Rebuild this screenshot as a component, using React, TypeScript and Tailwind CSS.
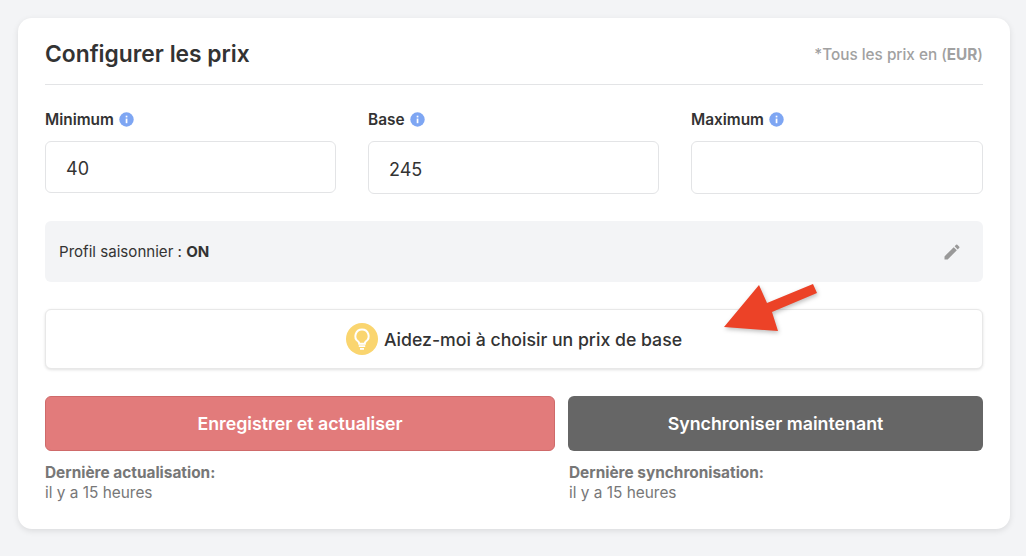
import React from 'react';

const FONT = "font-['Inter','Noto_Sans',sans-serif]";

const InfoIcon: React.FC = () => (
  <svg width="15" height="15" viewBox="0 0 15 15" className="ml-[5px] shrink-0">
    <circle cx="7.5" cy="7.5" r="7.2" fill="#7ea6f3" />
    <rect x="6.7" y="6.6" width="1.7" height="4.6" fill="#fff" />
    <rect x="6.7" y="3.7" width="1.7" height="1.7" fill="#fff" />
  </svg>
);

const PriceField: React.FC<{ label: string; value: string; boxClass: string }> = ({ label, value, boxClass }) => (
  <div>
    <div className="flex items-center h-[20px] text-[15.4px] leading-[20px] font-semibold text-[#333333]">
      <span className="pt-[2px]">{label}</span>
      <InfoIcon />
    </div>
    <div className={`mt-[12px] flex items-center rounded-[6px] border border-[#e3e4e6] bg-white pl-[20px] pt-[2px] text-[18px] text-[#333333] ${boxClass}`}>
      {value}
    </div>
  </div>
);

const Arrow: React.FC = () => (
  <svg width="130" height="75" viewBox="0 0 130 75" className="absolute left-[697px] top-[265px] drop-shadow-[1px_2px_2px_rgba(0,0,0,0.25)]">
    <path d="M27 62 L62 20 L70 38 L116 19 L120 28 L75 47 L81 66 Z" fill="#ec4227" />
  </svg>
);

export default function App() {
  return (
    <div className={`relative w-[1026px] h-[556px] bg-[#f3f4f6] pl-[18px] pr-[16px] pt-[18px] overflow-hidden ${FONT}`}>
      <div className="h-[511px] rounded-[14px] bg-white shadow-[0_2px_6px_rgba(0,0,0,0.1)] px-[27px]">
        <div className="h-[67px] flex items-center justify-between border-b border-[#e3e4e6] pt-[6px]">
          <h1 className="text-[22.8px] font-semibold text-[#333333]">Configurer les prix</h1>
          <span className="pt-[2px] text-[15.3px] font-medium text-[#a1a1a1]">
            *Tous les prix en (<b className="font-bold">EUR</b>)
          </span>
        </div>

        <div className="mt-[24px] grid grid-cols-[291px_291px_292px] gap-x-[32px]">
          <PriceField label="Minimum" value="40" boxClass="h-[52px]" />
          <PriceField label="Base" value="245" boxClass="h-[53px] pt-[3px]" />
          <PriceField label="Maximum" value="" boxClass="h-[53px]" />
        </div>

        <div className="mt-[27px] h-[61px] flex items-center justify-between rounded-[6px] bg-[#f3f4f6] pl-[14px] pr-[21px] text-[15.1px] text-[#333333]">
          <span className="pt-[2px]">
            Profil saisonnier : <b className="font-bold">ON</b>
          </span>
          <svg width="20" height="20" viewBox="0 0 24 24" fill="#999999">
            <path d="M3 17.25V21h3.75L17.81 9.94l-3.75-3.75L3 17.25zM20.71 7.04a1 1 0 0 0 0-1.41l-2.34-2.34a1 1 0 0 0-1.41 0l-1.83 1.83 3.75 3.75 1.83-1.83z" />
          </svg>
        </div>

        <div className="mt-[27px] h-[60px] flex items-center justify-center gap-[6px] rounded-[6px] border border-[#e8e8e8] bg-white shadow-[0_1px_3px_rgba(0,0,0,0.12)] text-[17.7px] font-medium text-[#333333]">
          <svg width="32" height="32" viewBox="0 0 32 32" fill="none">
            <circle cx="16" cy="16" r="16" fill="#fad56f" />
            <path d="M16 6.5a6.6 6.6 0 0 0-3.8 12c.7.6 1 1.3 1 2.3h5.6c0-1 .3-1.7 1-2.3A6.6 6.6 0 0 0 16 6.5z" stroke="#fff" strokeWidth="2" />
            <path d="M12.8 23.2h6.4M14 25.8h4" stroke="#fff" strokeWidth="1.8" />
          </svg>
          <span className="pt-[3px]">Aidez-moi à choisir un prix de base</span>
        </div>

        <div className="mt-[27px] grid grid-cols-[510px_415px] gap-x-[13px]">
          <div>
            <div className="h-[55px] flex items-center justify-center rounded-[6px] border border-[#cf6a6a] bg-[#e27b7b] pt-[2px] text-[17.8px] font-semibold text-white">
              Enregistrer et actualiser
            </div>
            <div className="mt-[12px] text-[15.4px] leading-[20px] text-[#777777]">
              <b className="block font-bold">Dernière actualisation:</b>
              il y a 15 heures
            </div>
          </div>
          <div>
            <div className="h-[55px] flex items-center justify-center rounded-[6px] bg-[#666666] pt-[2px] text-[17.8px] font-semibold text-white">
              Synchroniser maintenant
            </div>
            <div className="mt-[12px] pl-[1px] text-[15.4px] leading-[20px] text-[#777777]">
              <b className="block font-bold">Dernière synchronisation:</b>
              il y a 15 heures
            </div>
          </div>
        </div>
      </div>
      <Arrow />
    </div>
  );
}
